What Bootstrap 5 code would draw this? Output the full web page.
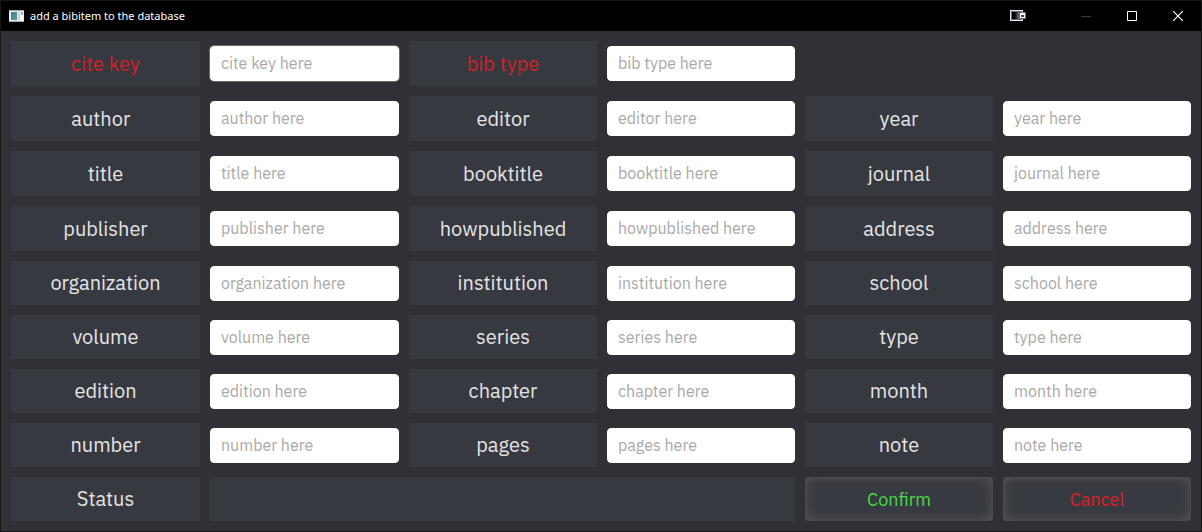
<!DOCTYPE html>
<html lang="en">
<head>
<meta charset="utf-8">
<meta name="viewport" content="width=device-width, initial-scale=1">
<title>add a bibitem to the database</title>
<link href="https://cdn.jsdelivr.net/npm/bootstrap@5.3.0/dist/css/bootstrap.min.css" rel="stylesheet">
<style>
  body { background: #303136; color: #e4e4e4; font-family: "IBM Plex Sans", "Open Sans", sans-serif; font-variant-ligatures: none; border: 1px solid #171718; }
  .title-bar { background: #000; height: 30px; font: 400 11px/30px "Segoe UI", "Noto Sans", sans-serif; color: #fff; padding-left: 8px; }
  .caption { margin-left: 6px; }
  .win-btn { width: 46px; height: 30px; border: 0; background: none; padding: 0; color: #fff; }
  .win-btn:disabled { color: #3a3a3a; }
  .cast-btn { margin-right: 22px; }
  .fields { gap: 10px; padding: 10px; grid-template-columns: repeat(2, minmax(0, 189fr)) repeat(4, minmax(0, 188fr)); grid-template-rows: repeat(4, minmax(45px, 45fr)) repeat(5, minmax(44px, 44fr)); }
  .tile { background: #373940; font-size: 20px; line-height: 24px; }
  .required { color: #d32029; }
  .row-start { grid-column: 1; }
  .status-line { grid-column: span 3; }
  .fields .form-control { height: 35px; margin-top: 5px; padding: 0 10px 2px; border: 1px solid #fff; border-radius: 4px; font-size: 16px; font-weight: 400; color: #222; background: #fff; box-shadow: none; }
  .fields .form-control::placeholder { color: #a9a9a9; opacity: 1; }
  .fields .current { box-shadow: 0 0 0 1px #66676b; }
  .action { border: 0; border-radius: 4px; background: #373a40; box-shadow: inset 0 0 12px #5a5b5d; font-size: 18px; font-weight: 400; padding: 0; }
  .action-confirm, .action-confirm:hover { color: #4bd849; }
  .action-cancel, .action-cancel:hover { color: #dc1f27; }
</style>
</head>
<body class="min-vh-100 d-flex flex-column">
<header class="title-bar d-flex align-items-center">
  <svg width="15" height="12" viewBox="0 0 15 12" aria-hidden="true">
    <defs><linearGradient id="pane" x2="1" y2="1"><stop stop-color="#4a82a4"/><stop offset="1" stop-color="#57a283"/></linearGradient></defs>
    <path fill="#e9eaeb" d="M0 0h15v12H0z"/><path fill="#a9adb2" d="M0 0h15v1H0zM0 11h15v1H0z"/>
    <path fill="url(#pane)" d="M2 2h6v8H2z"/><path fill="#cdd1d2" d="M9 2h2v8H9z"/><path fill="#fff" d="M11 2h3v8h-3z"/><path fill="#8fb8a9" d="M12 2h2v3h-2z"/>
  </svg>
  <span class="caption me-auto">add a bibitem to the database</span>
  <button class="win-btn cast-btn" type="button" aria-label="Cast window">
    <svg class="d-block mx-auto" width="16" height="12" viewBox="0 0 16 12">
      <defs><linearGradient id="fade"><stop offset=".3" stop-color="#000"/><stop offset="1" stop-color="#aaa"/></linearGradient></defs>
      <path fill="#e8e8f0" d="M0 0h13v11H0z"/><path fill="#656579" d="M1 1h11v9H1z"/><path fill="url(#fade)" d="M2 2h9v7H2z"/>
      <path fill="#656579" d="M9 2h7v7H9z"/><path fill="#fff" d="M10 3h5v5h-5z"/><path fill="#44455c" d="M11 5h3v2h-3z"/>
    </svg>
  </button>
  <button class="win-btn" type="button" aria-label="Minimize" disabled><svg class="d-block mx-auto" width="10" height="10"><path fill="currentColor" d="M0 5h10v1H0z"/></svg></button>
  <button class="win-btn" type="button" aria-label="Maximize"><svg class="d-block mx-auto" width="10" height="10"><path fill="none" stroke="currentColor" d="M.5.5h9v9h-9z"/></svg></button>
  <button class="win-btn" type="button" aria-label="Close"><svg class="d-block mx-auto" width="10" height="10"><path stroke="currentColor" stroke-width="1.2" d="M0 0l10 10M10 0L0 10"/></svg></button>
</header>
<form class="fields d-grid flex-grow-1">
  <label class="tile required d-flex align-items-center justify-content-center" for="citekey">cite key</label>
  <input class="form-control current" id="citekey" type="text" placeholder="cite key here">
  <label class="tile required d-flex align-items-center justify-content-center" for="bibtype">bib type</label>
  <input class="form-control" id="bibtype" type="text" placeholder="bib type here">

  <label class="tile row-start d-flex align-items-center justify-content-center" for="author">author&nbsp;&nbsp;</label>
  <input class="form-control" id="author" type="text" placeholder="author here">
  <label class="tile d-flex align-items-center justify-content-center" for="editor">editor</label>
  <input class="form-control" id="editor" type="text" placeholder="editor here">
  <label class="tile d-flex align-items-center justify-content-center" for="year">year</label>
  <input class="form-control" id="year" type="text" placeholder="year here">

  <label class="tile d-flex align-items-center justify-content-center" for="title">title</label>
  <input class="form-control" id="title" type="text" placeholder="title here">
  <label class="tile d-flex align-items-center justify-content-center" for="booktitle">booktitle</label>
  <input class="form-control" id="booktitle" type="text" placeholder="booktitle here">
  <label class="tile d-flex align-items-center justify-content-center" for="journal">journal</label>
  <input class="form-control" id="journal" type="text" placeholder="journal here">

  <label class="tile d-flex align-items-center justify-content-center" for="publisher">publisher</label>
  <input class="form-control" id="publisher" type="text" placeholder="publisher here">
  <label class="tile d-flex align-items-center justify-content-center" for="howpublished">howpublished</label>
  <input class="form-control" id="howpublished" type="text" placeholder="howpublished here">
  <label class="tile d-flex align-items-center justify-content-center" for="address">address</label>
  <input class="form-control" id="address" type="text" placeholder="address here">

  <label class="tile d-flex align-items-center justify-content-center" for="organization">organization</label>
  <input class="form-control" id="organization" type="text" placeholder="organization here">
  <label class="tile d-flex align-items-center justify-content-center" for="institution">institution</label>
  <input class="form-control" id="institution" type="text" placeholder="institution here">
  <label class="tile d-flex align-items-center justify-content-center" for="school">school</label>
  <input class="form-control" id="school" type="text" placeholder="school here">

  <label class="tile d-flex align-items-center justify-content-center" for="volume">volume</label>
  <input class="form-control" id="volume" type="text" placeholder="volume here">
  <label class="tile d-flex align-items-center justify-content-center" for="series">series</label>
  <input class="form-control" id="series" type="text" placeholder="series here">
  <label class="tile d-flex align-items-center justify-content-center" for="type">type</label>
  <input class="form-control" id="type" type="text" placeholder="type here">

  <label class="tile d-flex align-items-center justify-content-center" for="edition">edition</label>
  <input class="form-control" id="edition" type="text" placeholder="edition here">
  <label class="tile d-flex align-items-center justify-content-center" for="chapter">chapter</label>
  <input class="form-control" id="chapter" type="text" placeholder="chapter here">
  <label class="tile d-flex align-items-center justify-content-center" for="month">month</label>
  <input class="form-control" id="month" type="text" placeholder="month here">

  <label class="tile d-flex align-items-center justify-content-center" for="number">number</label>
  <input class="form-control" id="number" type="text" placeholder="number here">
  <label class="tile d-flex align-items-center justify-content-center" for="pages">pages</label>
  <input class="form-control" id="pages" type="text" placeholder="pages here">
  <label class="tile d-flex align-items-center justify-content-center" for="note">note</label>
  <input class="form-control" id="note" type="text" placeholder="note here">

  <label class="tile d-flex align-items-center justify-content-center" for="status">Status</label>
  <output class="tile status-line" id="status"></output>
  <button class="btn action action-confirm" type="button">Confirm</button>
  <button class="btn action action-cancel" type="button">Cancel</button>
</form>
<script src="https://cdn.jsdelivr.net/npm/bootstrap@5.3.0/dist/js/bootstrap.bundle.min.js"></script>
</body>
</html>
